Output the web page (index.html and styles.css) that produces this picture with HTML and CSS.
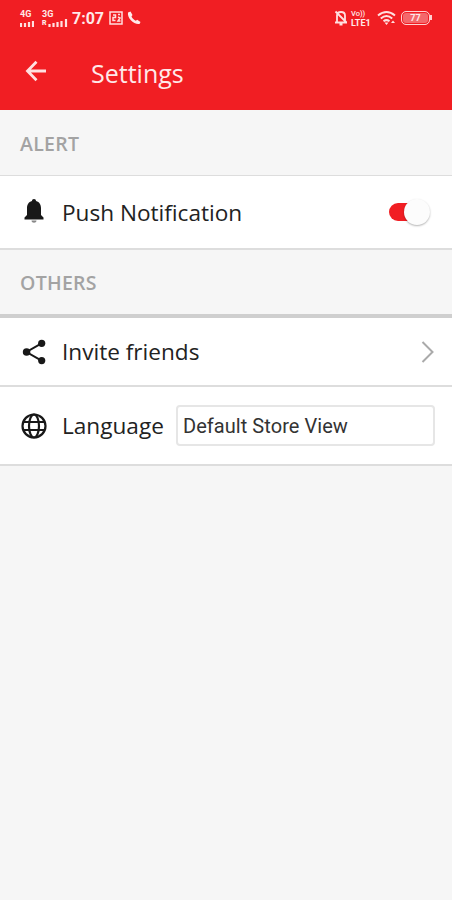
FILE: index.html
```html
<!DOCTYPE html>
<html lang="en">
<head>
	<meta charset="UTF-8">
	<title>Settings</title>
	<link rel="stylesheet" href="styles.css">
</head>
<body>
	<header>
		<div class="status">
			<div class="net net-4g">
				<span>4G</span>
				<svg width="14" height="6" viewBox="0 0 14 6"><path d="M1 2v4M5 2v4M9 1v5M13 0v6"/></svg>
			</div>
			<div class="net net-3g">
				<span>3G</span>
				<div class="roam">
					<b>R</b>
					<svg width="20" height="8" viewBox="0 0 20 8"><path d="M1.500 5v3M5.500 4v4M9.500 3v5M13.500 2v6M18 0v8"/></svg>
				</div>
			</div>
			<span class="time">7:07</span>
			<svg class="sim" width="14" height="14" viewBox="0 0 14 14"><path d="M1 1h12v12H1zM4 4h2.500v2.500H4v3h2.500M9 3.500h2M9 6l2 1-2 3h2.500"/></svg>
			<svg class="phone" width="14" height="14" viewBox="0 0 14 14"><path d="M1 1.500 3.500.500 5.500 4 4.500 5.500C5.500 7.500 7 9 8.800 9.800L10.200 8.700 13.500 11 12.500 13C7 14 0 7 1 1.500z"/></svg>
			<svg class="mute" width="14" height="16" viewBox="0 0 14 16"><path d="M3 12V5.500C3 .800 11 .800 11 5.500V12M1 12.500h12M1.500 1.500l11 11M5.500 14.500h3"/></svg>
			<div class="lte"><span>Vo))</span><b>LTE1</b></div>
			<svg class="wifi" width="20" height="16" viewBox="0 0 20 16"><path d="M1 5.500Q9.500-1.500 18 5.500M3.800 8.500Q9.500 3.500 15.200 8.500M6.500 11.300Q9.500 9 12.500 11.300"/><path class="dot" d="M7.500 12.500h4l-2 2.500zM14 13l2-2.500 2 2.500z"/></svg>
			<div class="battery">77</div>
		</div>
		<div class="bar">
			<svg width="22" height="22" viewBox="0 0 22 22"><path d="M21 11H3M11.500 1.800 2.500 11l9 9.200"/></svg>
			<h1>Settings</h1>
		</div>
	</header>

	<h2>ALERT</h2>
	<div class="row push">
		<svg class="bell" width="24" height="26" viewBox="0 0 24 26"><path d="M12 1c1.300 0 2 .800 2 2 3.600 1 5 4 5 7v7l2.500 2.500V21.500h-19v-2L5 17v-7c0-3 1.400-6 5-7 0-1.200.700-2 2-2z"/><path class="clapper" d="M9.500 22.500h5c0 3-5 3-5 0z"/></svg>
		<span class="label">Push Notification</span>
		<div class="switch"><i></i></div>
	</div>

	<h2 class="others">OTHERS</h2>
	<div class="row invite">
		<svg width="24" height="26" viewBox="0 0 24 26"><path class="line" d="M19.500 4.300 4.500 13l15 8.700"/><circle cx="19.700" cy="4.300" r="3.600"/><circle cx="4.600" cy="13" r="3.800"/><circle cx="19.700" cy="21.600" r="3.600"/></svg>
		<span class="label">Invite friends</span>
		<svg class="arrow" width="13" height="22" viewBox="0 0 13 22"><path d="M1.500 1 11.500 11l-10 10"/></svg>
	</div>
	<div class="row language">
		<svg class="globe" width="26" height="26" viewBox="0 0 26 26"><circle cx="13" cy="13" r="11.500"/><ellipse cx="13" cy="13" rx="5" ry="11.500"/><path d="M2.500 9h21M2.500 17h21"/></svg>
		<span class="label">Language</span>
		<div class="select">Default Store View</div>
	</div>
</body>
</html>
```
FILE: styles.css
```css
*{
	margin: 0;
	padding: 0;
	box-sizing: border-box;
}
body{
	background-color: #f6f6f6;
	font-family: "Open Sans", sans-serif;
	color: #222;
}
svg{
	display: block;
	flex: none;
}
header{
	height: 110px;
	background-color: #f11e23;
	color: #ffe9e9;
}
header svg{
	fill: none;
	stroke: #ffe0e0;
}
/* 状态栏 */
.status{
	display: flex;
	align-items: center;
	height: 36px;
	padding: 0 19px 0 20px;
	font-family: Roboto, sans-serif;
}
.net{
	height: 17px;
	font-size: 9px;
	font-weight: bold;
	line-height: 9px;
}
.net span{
	display: block;
}
.net svg{
	stroke-width: 2.2;
}
.net-4g{
	width: 22px;
}
.net-4g svg{
	margin-top: 2px;
}
.net-3g{
	width: 30px;
}
.roam{
	display: flex;
	align-items: flex-end;
	height: 8px;
}
.roam b{
	width: 6px;
	font-size: 7px;
	line-height: 7px;
}
.time{
	width: 37px;
	font-size: 16px;
	font-weight: bold;
}
.sim{
	stroke-width: 1.5;
}
header .phone{
	margin-left: 4px;
	fill: #ffe9e9;
	stroke: none;
}
.mute{
	margin-left: auto;
	stroke-width: 1.8;
}
.lte{
	width: 22px;
	margin-left: 3px;
	font-size: 7.5px;
	line-height: 9px;
	white-space: nowrap;
}
.lte span, .lte b{
	display: block;
}
.lte span{
	font-weight: 500;
}
.lte b{
	font-size: 9px;
	line-height: 10px;
}
.wifi{
	margin: 0 4px 0 4px;
	stroke-width: 2;
}
header .dot{
	fill: #ffe0e0;
	stroke: none;
}
.battery{
	position: relative;
	width: 29px;
	height: 14px;
	border: 1.5px solid #ffd0d0;
	border-radius: 5px;
	background-color: #f4686b;
	box-shadow: inset 0 0 0 1px #f11e23;
	font-size: 9px;
	font-weight: bold;
	line-height: 12px;
	text-align: center;
	margin-right: 3px;
}
.battery:after{
	content: "";
	position: absolute;
	right: -3px;
	top: 3px;
	width: 2px;
	height: 5px;
	background-color: #ffd0d0;
}
.bar{
	display: flex;
	align-items: center;
	height: 74px;
	padding-left: 25px;
}
.bar svg{
	margin-top: -5px;
	stroke-width: 2.8;
}
h1{
	margin-left: 44px;
	font-size: 25px;
	font-weight: normal;
}
h2{
	height: 66px;
	padding-left: 20px;
	border-bottom: 1px solid #ddd;
	font-size: 19.5px;
	font-weight: 600;
	line-height: 67px;
	letter-spacing: .3px;
	color: #a3a3a3;
}
.others{
	height: 68px;
	border-bottom: 4px solid #cfcfcf;
	line-height: 65px;
}
.row{
	display: flex;
	align-items: center;
	padding-left: 22px;
	border-bottom: 2px solid #ddd;
	background-color: #fff;
}
.row svg{
	fill: #181818;
}
.label{
	margin-left: 16px;
	font-size: 22.6px;
}
.push{
	height: 74px;
}
.bell{
	margin-top: -2px;
}
.bell .clapper{
	fill: #888;
}
.switch{
	position: relative;
	width: 38px;
	height: 18px;
	margin: 0 25px 0 auto;
	border-radius: 9px;
	background-color: #f11e23;
}
.switch i{
	position: absolute;
	right: -3px;
	top: -4px;
	width: 26px;
	height: 26px;
	border-radius: 50%;
	background-color: #fcfcfc;
	box-shadow: 0 1px 2px rgba(0,0,0,.3);
}
.invite{
	height: 69px;
}
.invite .line{
	fill: none;
	stroke: #181818;
	stroke-width: 2;
}
.row .arrow{
	margin: 0 18px 0 auto;
	fill: none;
	stroke: #aaa;
	stroke-width: 2;
}
.language{
	height: 79px;
	padding-left: 21px;
}
.row .globe{
	fill: none;
	stroke: #181818;
	stroke-width: 2.2;
}
.language .label{
	width: 114px;
	margin-left: 15px;
}
.select{
	width: 259px;
	height: 41px;
	padding-left: 5px;
	border: 2px solid #e6e6e6;
	border-radius: 4px;
	font-family: Roboto, sans-serif;
	font-size: 20px;
	line-height: 38px;
	color: #333;
	letter-spacing: .05px;
}
```
